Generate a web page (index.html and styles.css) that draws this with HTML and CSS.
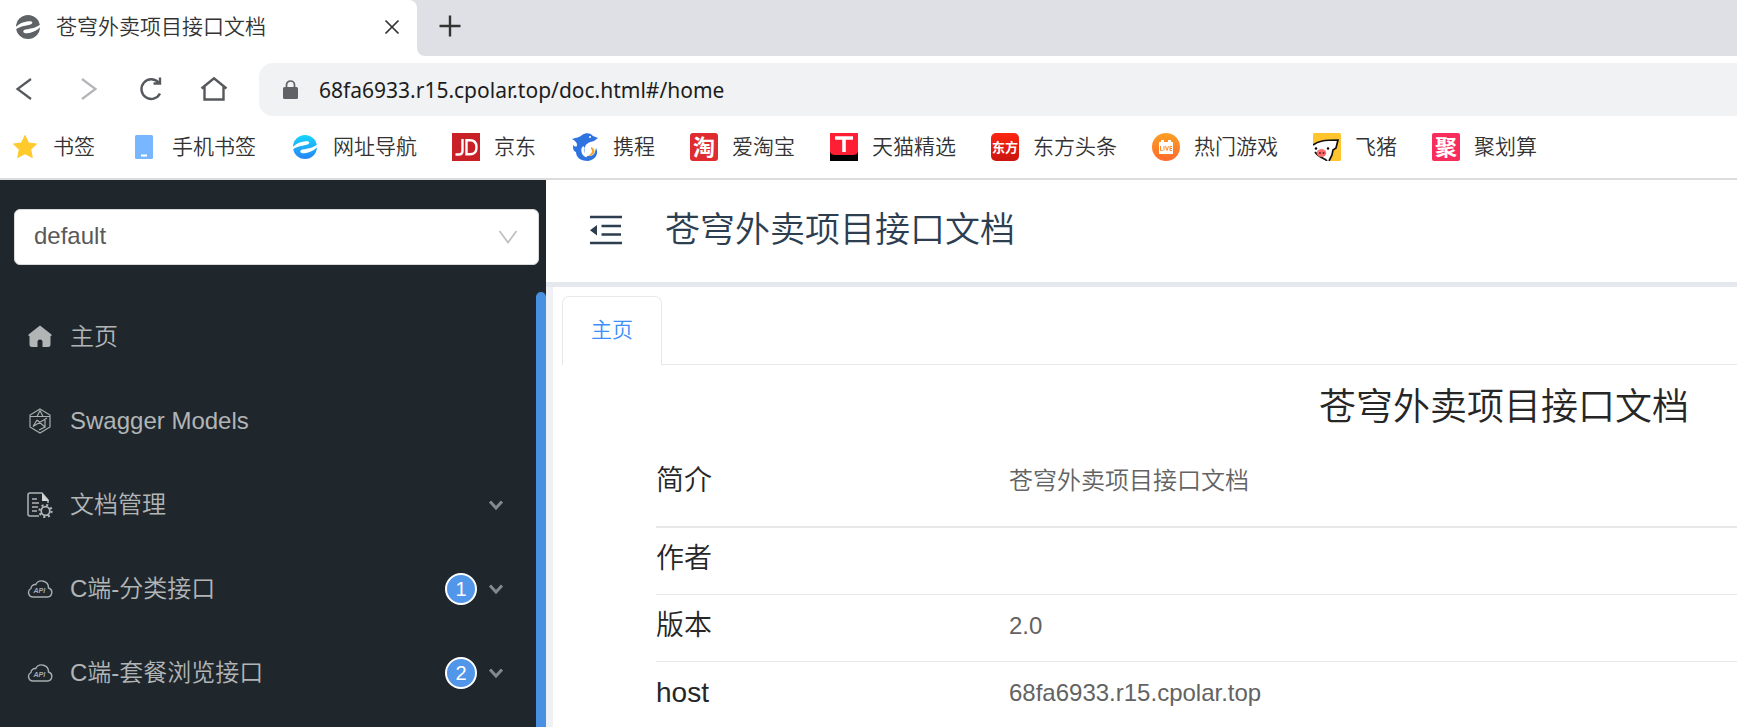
FILE: index.html
```html
<!DOCTYPE html>
<html lang="zh-CN">
<head>
<meta charset="utf-8">
<title>苍穹外卖项目接口文档</title>
<link rel="stylesheet" href="styles.css">
</head>
<body>
<svg class="defs" aria-hidden="true">
  <defs>
    <linearGradient id="g-blue" x1="0" y1="0" x2="0" y2="1"><stop offset="0" stop-color="#16d6fb"/><stop offset="1" stop-color="#2784f5"/></linearGradient>
    <linearGradient id="g-red" x1="0" y1="0" x2="0" y2="1"><stop offset="0" stop-color="#ff2412"/><stop offset="1" stop-color="#c9150f"/></linearGradient>
    <linearGradient id="g-orange" x1="0" y1="0" x2="0" y2="1"><stop offset="0" stop-color="#fba024"/><stop offset="1" stop-color="#ff6a2b"/></linearGradient>
    <symbol id="swirl" viewBox="0 0 24 24">
      <circle cx="12" cy="12" r="12"/>
      <path d="M-1 13C3 8 9 6.200 15 6.200Q18 7.500 14.500 9.500C10 11 5 10.500 -1 15ZM25 11C21 16 15 18.200 9 18.200 6 16.800 7.500 15 9.500 14.500 14 13.500 19 13.500 25 9Z" fill="#fff"/>
    </symbol>
    <symbol id="api" viewBox="0 0 26 18">
      <path d="M6 17H20.500A4.600 4.600 0 0 0 21.500 8 6.800 6.800 0 0 0 8.700 4.600 4 4 0 0 0 4 8.500 4.500 4.500 0 0 0 6 17Z" fill="none" stroke="#a9adae" stroke-width="1.400"/>
      <text x="6.500" y="13" font-family="Liberation Sans, sans-serif" font-size="7" font-weight="bold" font-style="italic" fill="#a9adae">API</text>
    </symbol>
    <symbol id="down" viewBox="0 0 16 12"><path d="M2 2.500L8 9L14 2.500" fill="none" stroke="#84898b" stroke-width="3"/></symbol>
  </defs>
</svg>

<header class="browser">
  <div class="tabstrip">
    <div class="browser-tab">
      <svg class="favicon" viewBox="0 0 24 24" fill="#5f6368"><use href="#swirl"/></svg>
      <span class="browser-tab-title">苍穹外卖项目接口文档</span>
      <button class="icon-btn" aria-label="关闭标签页"><svg width="16" height="16" viewBox="0 0 16 16"><path d="M1.500 1.500L14.500 14.500M14.500 1.500L1.500 14.500" stroke="#333" stroke-width="1.700"/></svg></button>
    </div>
    <div class="tabstrip-rest">
      <button class="icon-btn" aria-label="新建标签页"><svg width="22" height="22" viewBox="0 0 22 22"><path d="M11 .5V21.500M.5 11H21.500" stroke="#333" stroke-width="2.400"/></svg></button>
    </div>
  </div>

  <div class="toolbar">
    <div class="tools">
      <button class="icon-btn" aria-label="后退"><svg width="28" height="28" viewBox="0 0 28 28"><path d="M20 3L6.500 13L20 23" fill="none" stroke="#55585d" stroke-width="2.200"/></svg></button>
      <button class="icon-btn" aria-label="前进"><svg width="28" height="28" viewBox="0 0 28 28"><path d="M8 3L21.500 13L8 23" fill="none" stroke="#b4b5b8" stroke-width="2.200"/></svg></button>
      <button class="icon-btn" aria-label="刷新"><svg width="28" height="28" viewBox="0 0 28 28"><path d="M23 17.500A9.800 9.800 0 1 1 21.500 6.500M23 1.500V7.500H16.500" fill="none" stroke="#55585d" stroke-width="2.400"/></svg></button>
      <button class="icon-btn" aria-label="主页"><svg width="28" height="28" viewBox="0 0 28 28"><path d="M1.500 12.500L14 2.200L26.500 12.500M4.500 10.500V23.500H23.500V10.500" fill="none" stroke="#55585d" stroke-width="2.400"/></svg></button>
    </div>
    <label class="address">
      <svg width="15" height="19" viewBox="0 0 15 19"><rect y="7" width="15" height="12" rx="1.500" fill="#5f6368"/><path d="M3.500 8V5A4 4 0 0 1 11.500 5V8" fill="none" stroke="#5f6368" stroke-width="1.700"/></svg>
      <input type="text" aria-label="地址" value="68fa6933.r15.cpolar.top/doc.html#/home">
    </label>
  </div>

  <nav class="bookmarks" aria-label="书签栏">
    <a href="#"><svg viewBox="0 0 28 28"><path d="M14 2.500L17.500 10 25.500 11 19.700 16.600 21.300 24.500 14 20.700 6.700 24.500 8.300 16.600 2.500 11 10.500 10Z" fill="#ffca2c" stroke="#ffca2c" stroke-linejoin="round"/></svg>书签</a>
    <a href="#"><svg viewBox="0 0 28 28"><rect x="5" y="2" width="18" height="24" rx="1.500" fill="#78b7ff"/><rect x="11" y="21.500" width="6" height="2" fill="#fff"/></svg>手机书签</a>
    <a href="#"><svg viewBox="0 0 28 28" fill="url(#g-blue)"><use href="#swirl" x="2" y="2" width="24" height="24"/></svg>网址导航</a>
    <a href="#"><svg viewBox="0 0 28 28"><rect width="28" height="28" fill="#c91f27"/><path d="M10.500 6V18Q10.500 21.500 7 21.500H3.500M14.500 7.200V21.300H18Q24.500 21.300 24.500 14.200 24.500 7.200 18 7.200Z" fill="none" stroke="#fff" stroke-width="2.400"/></svg>京东</a>
    <a href="#"><svg viewBox="0 0 28 28"><path d="M1 6C6 4 8 5 11 2 15-1 20 0 22 3L27 5 23 8C18 9 14 11 14 15 12 20 15 24 18 23 23 23 24 20 25 15 28 20 25 27 17 28 9 28 5 24 5 19 2 18 2 15 2 12 4 14 6 14 6 12 6 9 4 8 1 6Z" fill="#2f73e0"/><path d="M13 14C10 17 12 22 16 23" fill="none" stroke="#fff" stroke-width="2.500"/><path d="M20 14C26 16 24 23 17 23 21 20 22 18 20 16Z" fill="#f6a62c"/><circle cx="19" cy="4" r="1" fill="#fff"/></svg>携程</a>
    <a href="#"><svg viewBox="0 0 28 28"><rect width="28" height="28" rx="3" fill="#de2c31"/><text x="14" y="22" class="glyph glyph-tao">淘</text></svg>爱淘宝</a>
    <a href="#"><svg viewBox="0 0 28 28"><rect width="28" height="28" fill="#000"/><path d="M0 0H28V19Q27 22 23 22H5Q1 22 0 19Z" fill="#ff1f35"/><path d="M5 5H23M14 5V19" stroke="#fff" stroke-width="3.600"/></svg>天猫精选</a>
    <a href="#"><svg viewBox="0 0 28 28"><rect width="28" height="28" rx="5" fill="url(#g-red)"/><text x="14" y="19" class="glyph glyph-east">东方</text></svg>东方头条</a>
    <a href="#"><svg viewBox="0 0 28 28"><circle cx="14" cy="14" r="14" fill="url(#g-orange)"/><path d="M7 9H9V7H12V9H16V7H19V9H21V21H7Z" fill="#fff"/><path d="M8.500 13V17.500H10.500M12 13V17.500M13.500 13L15 17.500L16.500 13M20 13.500H18V17.500H20M18 15.500H20" fill="none" stroke="#ff8b2a"/></svg>热门游戏</a>
    <a href="#"><svg viewBox="0 0 28 28"><rect width="28" height="28" rx="1.500" fill="#ffc42e"/><path d="M0 12C5 8 11 7 25 7L23 15 20 17 19 23 16 28H0Z" fill="#fff"/><path d="M0 12C5 8 11 7 25 7L23 15 20 17 19 22 16 28M2 19C6 25 12 25 14 28" fill="none" stroke="#111" stroke-width="1.700"/><ellipse cx="8.500" cy="20" rx="4.800" ry="4" fill="#ff6e6d"/><circle cx="7" cy="20" r="1" fill="#701e25"/><circle cx="10.500" cy="20" r="1" fill="#701e25"/><circle cx="3" cy="15.500" r="1.200"/><circle cx="15" cy="15.500" r="1.200"/></svg>飞猪</a>
    <a href="#"><svg viewBox="0 0 28 28"><rect width="28" height="28" rx="2" fill="#f92d5c"/><text x="14" y="22" class="glyph glyph-ju">聚</text></svg>聚划算</a>
  </nav>
</header>

<div class="app">
  <aside class="sidebar">
    <div class="group">
      <select aria-label="分组"><option>default</option></select>
      <svg class="group-arrow" width="20" height="16" viewBox="0 0 20 16"><path d="M1.500 2L10 13.500L18.500 2" fill="none" stroke="#bfbfbf" stroke-width="1.700"/></svg>
    </div>
    <div class="menu-scroll">
      <nav class="menu">
        <a class="menu-item" href="#/home">
          <svg viewBox="0 0 26 26"><path d="M13 1.500L24.500 10.500V12H23.500V20.500Q23.500 23 21 23H15.500V17.500Q15.500 15.500 13 15.500 10.500 15.500 10.500 17.500V23H5Q2.500 23 2.500 20.500V12H1.500V10.500Z" fill="#b2b5b6"/></svg>
          <span class="menu-text">主页</span></a>
        <a class="menu-item" href="#/models">
          <svg viewBox="0 0 26 26"><path d="M13 1L23 7V19L13 25L3 19V7ZM3 8.500H23M13 2.500L10 8.500M13 2.500L16 8.500M6 18.500L20 10M10 12L18 19 12 22M10 12L6 18.500M18 12V19" fill="none" stroke="#a9adae" stroke-width="1.200"/></svg>
          <span class="menu-text">Swagger Models</span></a>
        <button class="menu-item">
          <svg viewBox="0 0 26 26"><path d="M12 24H3Q1 24 1 22V3Q1 1 3 1H15L21 8V11M5 7H10M5 11H12M5 15H11M5 19H10" fill="none" stroke="#b2b5b6" stroke-width="1.500"/><path d="M15 1V9H22Z" fill="#d5d7d7"/><circle cx="18.500" cy="19" r="4.300" fill="none" stroke="#b2b5b6" stroke-width="1.700"/><circle cx="18.500" cy="19" r="6" fill="none" stroke="#b2b5b6" stroke-width="2.200" stroke-dasharray="2 2.710"/></svg>
          <span class="menu-text">文档管理</span>
          <svg class="caret" viewBox="0 0 16 12"><use href="#down"/></svg></button>
        <button class="menu-item">
          <svg viewBox="0 0 26 18"><use href="#api"/></svg>
          <span class="menu-text">C端-分类接口</span><span class="badge">1</span>
          <svg class="caret" viewBox="0 0 16 12"><use href="#down"/></svg></button>
        <button class="menu-item">
          <svg viewBox="0 0 26 18"><use href="#api"/></svg>
          <span class="menu-text">C端-套餐浏览接口</span><span class="badge">2</span>
          <svg class="caret" viewBox="0 0 16 12"><use href="#down"/></svg></button>
      </nav>
      <div class="thumb"></div>
    </div>
  </aside>

  <main class="main">
    <div class="page-header">
      <button class="icon-btn" aria-label="收起菜单"><svg width="32" height="30" viewBox="0 0 32 30"><path d="M0 2H32M11.500 11H31M11.500 19.500H31M0 28H32" stroke="#2c3e50" stroke-width="2.600"/><path d="M0 15.300L7 10V20.500Z" fill="#2c3e50"/></svg></button>
      <h1>苍穹外卖项目接口文档</h1>
    </div>
    <div class="content">
      <div class="tabs"><button class="tab">主页</button></div>
      <section class="doc">
        <h2>苍穹外卖项目接口文档</h2>
        <table>
          <tr class="intro"><th scope="row">简介</th><td>苍穹外卖项目接口文档</td></tr>
          <tr><th scope="row">作者</th><td></td></tr>
          <tr><th scope="row">版本</th><td>2.0</td></tr>
          <tr><th scope="row">host</th><td>68fa6933.r15.cpolar.top</td></tr>
        </table>
      </section>
    </div>
  </main>
</div>
</body>
</html>
```
FILE: styles.css
```css
* { box-sizing: border-box; }

body {
  margin: 0;
  height: 100vh;
  display: flex;
  flex-direction: column;
  overflow: hidden;
  background: #fff;
  font-family: "Liberation Sans", "Noto Sans CJK SC", sans-serif;
  font-weight: 350;
}

button, input, select { font: inherit; color: inherit; border: 0; margin: 0; padding: 0; background: none; }
a { color: inherit; text-decoration: none; }
svg { display: block; flex: none; }
.defs { position: absolute; width: 0; height: 0; }
.icon-btn { display: flex; align-items: center; justify-content: center; }

/* browser frame */
.browser { flex: none; border-bottom: 2px solid #dcdcdc; color: #333; font-size: 21px; }
.tabstrip { display: flex; height: 56px; background: linear-gradient(to bottom, #dee0e6 50%, #fff 50%); }
.browser-tab {
  display: flex;
  align-items: center;
  flex: 0 0 417px;
  padding: 0 17px 2px 16px;
  gap: 16px;
  background: #fff;
  border-radius: 0 8px 0 0;
}
.favicon { width: 24px; height: 24px; }
.browser-tab-title { flex: 1; line-height: 36px; }
.tabstrip-rest { flex: 1; display: flex; align-items: center; padding: 0 22px 4px; background: #dee0e6; border-radius: 0 0 0 8px; }

.toolbar { display: flex; align-items: center; padding-top: 7px; }
.tools { display: flex; flex: 0 0 259px; padding-left: 11px; gap: 35px; }
.address { flex: 1; display: flex; align-items: center; gap: 21px; height: 53px; padding-left: 24px; background: #f1f2f4; border-radius: 14px 0 0 14px; }
.address input { flex: 1; outline: 0; color: #1c1d20; font-family: "Noto Sans", sans-serif; font-weight: 400; font-size: 21px; }

.bookmarks { display: flex; gap: 35px; height: 62px; padding: 0 11px; align-items: center; white-space: nowrap; }
.bookmarks a { display: flex; align-items: center; gap: 14px; line-height: 40px; }
.bookmarks svg { width: 28px; height: 28px; }
.glyph { font-family: "Noto Sans CJK SC", sans-serif; font-weight: 700; fill: #fff; text-anchor: middle; }
.glyph-tao, .glyph-ju { font-size: 22px; }
.glyph-east { font-size: 13px; }

/* sidebar */
.app { flex: 1; display: flex; min-height: 0; }
.sidebar { flex: 0 0 546px; display: flex; flex-direction: column; padding-top: 29px; background: #1f272d; overflow: hidden; }
.group { position: relative; margin: 0 7px 0 14px; }
.group select {
  display: block;
  width: 100%;
  height: 56px;
  padding: 0 19px 4px;
  appearance: none;
  background: #fff;
  border: 1px solid #d9d9d9;
  border-radius: 6px;
  color: #595959;
  font-size: 24px;
}
.group-arrow { position: absolute; right: 21px; top: 20px; }
.menu-scroll { flex: 1; display: flex; margin-top: 27px; min-height: 0; }
.menu { flex: 1; padding-top: 3px; }
.menu-item {
  display: flex;
  align-items: center;
  width: 100%;
  height: 84px;
  padding: 0 32px 0 27px;
  gap: 11px;
  color: #b2b5b6;
  font-size: 24px;
  text-align: left;
}
.menu-item svg { width: 26px; }
.menu-text { flex: 1; padding-left: 6px; line-height: 32px; }
.menu-item .caret { width: 16px; }
.badge {
  width: 32px;
  height: 32px;
  border: 2px solid #fff;
  border-radius: 16px;
  background: #5296ea;
  color: #fff;
  font-size: 20px;
  line-height: 28px;
  text-align: center;
}
.thumb { width: 10px; background: #4a90e2; border-radius: 5px 5px 0 0; }

/* page */
.main {
  flex: 1;
  min-width: 0;
  display: flex;
  flex-direction: column;
  background: linear-gradient(#e5e8ed, #e5e8ed) 0 102px / 100% 5px no-repeat #f0f1f5;
}
.page-header { flex: none; display: flex; align-items: center; gap: 43px; height: 102px; padding: 0 44px 2px; background: #fff; color: #2c3e50; }
.page-header h1 { margin: 0; font-size: 35px; font-weight: 350; line-height: 40px; }
.content { flex: 1; margin-left: 7px; border-top: 5px solid #e5e8ed; background: #fff; }
.tabs { display: flex; padding: 9px 0 0 9px; }
.tabs::after { content: ""; flex: 1; border-bottom: 1px solid #e8e8e8; }
.tab { height: 69px; padding: 0 28px 2px; border: 1px solid #e8e8e8; border-bottom: 0; border-radius: 7px 7px 0 0; color: #3a8ffb; font-size: 21px; line-height: 32px; }
.doc { padding: 15px 0 0 103px; color: #262626; }
.doc h2 { margin: 0; padding-right: 48px; font-size: 37px; font-weight: 350; line-height: 56px; text-align: right; }
.doc table { width: 100%; border-collapse: separate; border-spacing: 0; table-layout: fixed; }
.doc th, .doc td { height: 67px; padding: 0 0 4px; border-bottom: 1px solid #e8e8e8; line-height: 40px; text-align: left; font-weight: 350; }
.doc th { width: 353px; font-size: 28px; }
.doc td { color: #636363; font-size: 24px; }
.doc .intro th, .doc .intro td { height: 92px; padding: 0; border-bottom-width: 2px; }
```
